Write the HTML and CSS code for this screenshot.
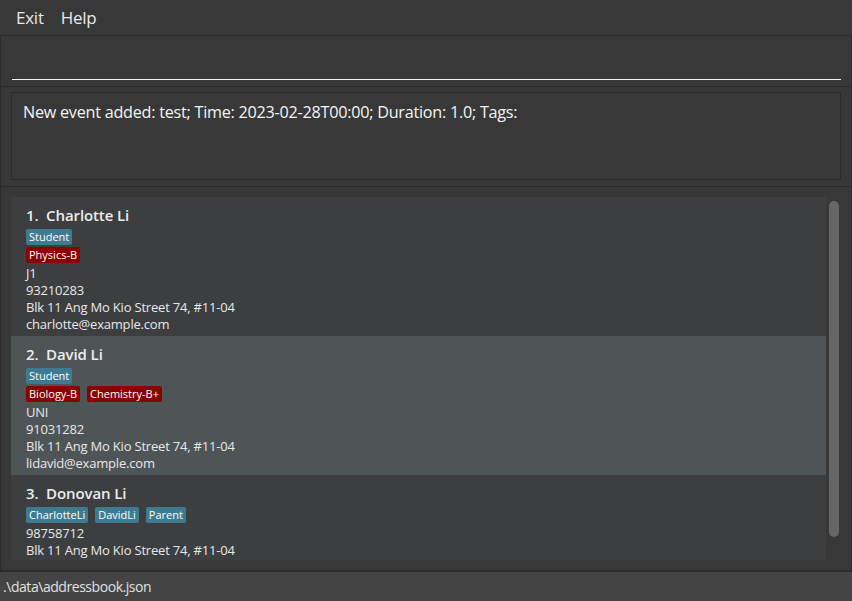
FILE: index.html
```html
<!DOCTYPE html>
<html>
<head>
<meta charset="utf-8">
<link rel="stylesheet" href="styles.css">
</head>
<body>
<div class="app">
  <div class="menubar">
    <span class="menu-item">Exit</span>
    <span class="menu-item">Help</span>
  </div>
  <div class="panel cmd-panel">
    <div class="cmd-field"></div>
  </div>
  <div class="panel result-panel">
    <div class="result-box">New event added: test; Time: 2023-02-28T00:00; Duration: 1.0; Tags:</div>
  </div>
  <div class="panel list-panel">
    <div class="list-viewport">
      <div class="cards">
        <div class="card">
          <div class="name">1.&nbsp; Charlotte Li</div>
          <div class="tags"><span class="tag blue">Student</span></div>
          <div class="tags"><span class="tag red">Physics-B</span></div>
          <div class="line">J1</div>
          <div class="line">93210283</div>
          <div class="line">Blk 11 Ang Mo Kio Street 74, #11-04</div>
          <div class="line">charlotte@example.com</div>
        </div>
        <div class="card selected">
          <div class="name">2.&nbsp; David Li</div>
          <div class="tags"><span class="tag blue">Student</span></div>
          <div class="tags"><span class="tag red">Biology-B</span><span class="tag red">Chemistry-B+</span></div>
          <div class="line">UNI</div>
          <div class="line">91031282</div>
          <div class="line">Blk 11 Ang Mo Kio Street 74, #11-04</div>
          <div class="line">lidavid@example.com</div>
        </div>
        <div class="card">
          <div class="name">3.&nbsp; Donovan Li</div>
          <div class="tags"><span class="tag blue">CharlotteLi</span><span class="tag blue">DavidLi</span><span class="tag blue">Parent</span></div>
          <div class="line">98758712</div>
          <div class="line">Blk 11 Ang Mo Kio Street 74, #11-04</div>
        </div>
      </div>
      <div class="scrollbar"><div class="thumb"></div></div>
    </div>
  </div>
  <div class="statusbar">.\data\addressbook.json</div>
</div>
</body>
</html>
```

FILE: styles.css
```css
html, body {
  margin: 0;
  padding: 0;
  background: #383838;
}
body {
  font-family: "Open Sans", "Noto Sans", sans-serif;
  color: #ffffff;
}
.app {
  width: 852px;
  height: 601px;
  display: flex;
  flex-direction: column;
  overflow: hidden;
}
.menubar {
  height: 35px;
  display: flex;
  align-items: center;
  gap: 17px;
  padding-left: 16px;
  padding-bottom: 1px;
  box-sizing: border-box;
  background: #383838;
}
.menu-item {
  font-size: 17px;
  color: #e8e8e8;
  letter-spacing: -0.25px;
}
.panel {
  border: 1px solid #2b2b2b;
  background: #383838;
  box-sizing: border-box;
}
.cmd-panel {
  height: 52px;
  padding: 43px 10px 0 11px;
}
.cmd-field {
  height: 0;
  border-bottom: 1px solid #f2f2f2;
}
.result-panel {
  height: 101px;
  margin-top: -1px;
  padding: 5px 10px 5px 10px;
}
.result-box {
  height: 88px;
  box-sizing: border-box;
  border: 1px solid #2b2b2b;
  padding: 8px 11px;
  font-size: 16.2px;
  color: #f4f4f4;
  letter-spacing: -0.25px;
}
.list-panel {
  height: 385px;
  margin-top: -1px;
  padding: 10px 10px 9px 10px;
}
.list-viewport {
  height: 363px;
  display: flex;
  overflow: hidden;
}
.cards {
  width: 815px;
  display: flex;
  flex-direction: column;
}
.card {
  flex: 0 0 auto;
  height: 139px;
  box-sizing: border-box;
  background: #3c3e40;
  padding: 7px 10px 0 15px;
}
.card:last-child {
  height: 85px;
}
.card.selected {
  background: #4f5457;
}
.name {
  font-size: 15px;
  font-weight: 600;
  line-height: 22px;
  color: #ececec;
  margin-bottom: 3px;
  letter-spacing: -0.1px;
}
.tags {
  display: flex;
  gap: 7px;
  margin-bottom: 2px;
}
.tag {
  font-size: 11px;
  line-height: 16px;
  height: 16px;
  padding: 0 3px;
  border-radius: 2px;
  color: #ffffff;
}
.tag.blue { background: #3e7b91; }
.tag.red { background: #8b0000; }
.line {
  font-size: 13px;
  line-height: 17px;
  color: #e8e8e8;
  letter-spacing: -0.2px;
}
.scrollbar {
  flex: 1;
  position: relative;
}
.thumb {
  position: absolute;
  left: 3px;
  top: 4px;
  width: 10px;
  height: 336px;
  border-radius: 5px;
  background: #666666;
}
.statusbar {
  height: 30px;
  background: #444444;
  border-top: 1px solid #2b2b2b;
  box-sizing: border-box;
  padding-left: 3px;
  display: flex;
  align-items: center;
  font-size: 14px;
  color: #e0e0e0;
  letter-spacing: -0.45px;
}
```
